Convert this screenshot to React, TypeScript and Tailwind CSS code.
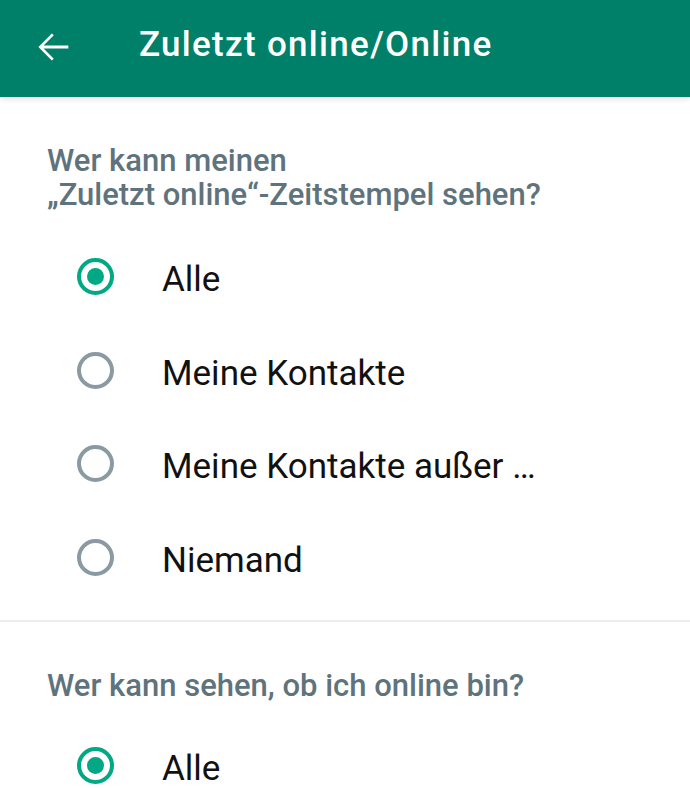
import React from "react";

const Radio = ({ checked }: { checked: boolean }) =>
  checked ? (
    <div className="w-[37px] h-[37px] rounded-full border-[4.5px] border-[#00a884] flex items-center justify-center">
      <div className="w-[17px] h-[17px] rounded-full bg-[#00a884]" />
    </div>
  ) : (
    <div className="w-[37px] h-[37px] rounded-full border-[4px] border-[#8a9aa3]" />
  );

const Option = ({ label, checked }: { label: string; checked?: boolean }) => (
  <div className="h-[93.5px] flex items-center">
    <div className="w-[162px] pl-[77px] flex items-center">
      <Radio checked={!!checked} />
    </div>
    <span className="text-[35px] text-[#111] leading-none pt-[6px]">{label}</span>
  </div>
);

export default function App() {
  return (
    <div
      className="w-[690px] h-[789px] bg-white overflow-hidden"
      style={{ fontFamily: "Roboto, 'Liberation Sans', sans-serif" }}
    >
      <div className="h-[97px] bg-[#008069] flex items-center shadow-[0_2px_6px_rgba(0,0,0,0.12)] relative z-10">
        <div className="w-[139px] flex items-center pl-[30px] pb-[3px]">
          <svg width="46" height="46" viewBox="0 0 24 24" fill="white">
            <path d="M20 11.2H7.1l5.3-5.3-1-1L4.4 12l7 7.1 1-1-5.3-5.3H20z" />
          </svg>
        </div>
        <span className="text-white text-[35px] tracking-[1.3px] font-medium leading-none pb-[8px]">
          Zuletzt online/Online
        </span>
      </div>

      <div className="pt-[47px] pb-[16px]">
        <div className="pl-[47px] text-[31px] leading-[34px] font-medium text-[#5f737d]">
          <div>Wer kann meinen</div>
          <div>„Zuletzt online“-Zeitstempel sehen?</div>
        </div>
        <div className="mt-[18px]">
          <Option label="Alle" checked />
          <Option label="Meine Kontakte" />
          <Option label="Meine Kontakte außer …" />
          <Option label="Niemand" />
        </div>
      </div>

      <div className="h-[2px] bg-[#ececec]" />

      <div className="pt-[47px]">
        <div className="pl-[47px] text-[31px] leading-[34px] font-medium text-[#5f737d]">
          Wer kann sehen, ob ich online bin?
        </div>
        <div className="mt-[16px]">
          <Option label="Alle" checked />
        </div>
      </div>
    </div>
  );
}
